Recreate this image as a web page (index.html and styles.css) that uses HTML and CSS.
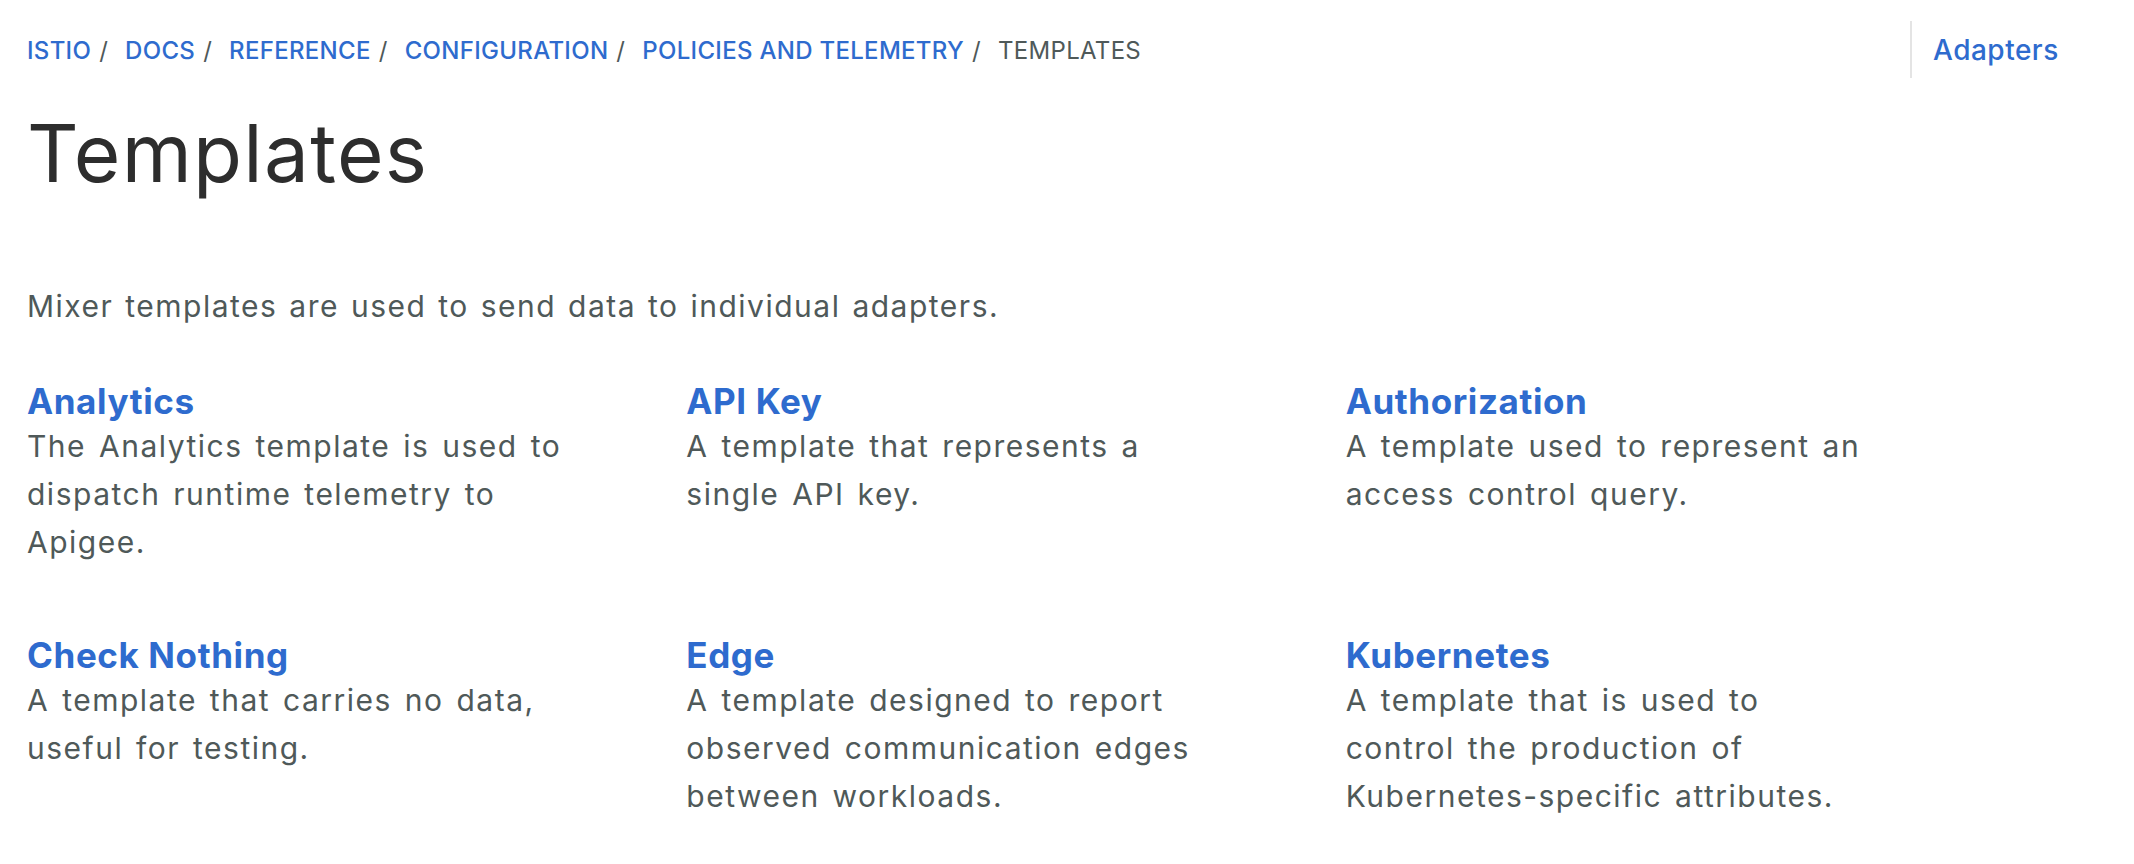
FILE: index.html
```html
<!DOCTYPE html>
<html lang="en">
<head>
<meta charset="utf-8">
<title>Templates</title>
<link rel="stylesheet" href="styles.css">
</head>
<body>
<div class="page">
  <main class="main">
    <nav class="breadcrumbs">
      <ol>
        <li><a href="#">Istio</a></li>
        <li><a href="#">Docs</a></li>
        <li><a href="#">Reference</a></li>
        <li><a href="#">Configuration</a></li>
        <li><a href="#">Policies and Telemetry</a></li>
        <li class="current">Templates</li>
      </ol>
    </nav>
    <h1 class="title">Templates</h1>
    <p class="lead">Mixer templates are used to send data to individual adapters.</p>
    <div class="entries">
      <div class="entry">
        <a class="entry-title" href="#">Analytics</a>
        <p class="entry-desc">The Analytics template is used to dispatch runtime telemetry to Apigee.</p>
      </div>
      <div class="entry">
        <a class="entry-title" href="#">API Key</a>
        <p class="entry-desc">A template that represents a single API key.</p>
      </div>
      <div class="entry">
        <a class="entry-title" href="#">Authorization</a>
        <p class="entry-desc">A template used to represent an access control query.</p>
      </div>
      <div class="entry">
        <a class="entry-title" href="#">Check Nothing</a>
        <p class="entry-desc">A template that carries no data, useful for testing.</p>
      </div>
      <div class="entry">
        <a class="entry-title" href="#">Edge</a>
        <p class="entry-desc">A template designed to report observed communication edges between workloads.</p>
      </div>
      <div class="entry">
        <a class="entry-title" href="#">Kubernetes</a>
        <p class="entry-desc">A template that is used to control the production of Kubernetes-specific attributes.</p>
      </div>
    </div>
  </main>
  <aside class="aside">
    <a class="aside-link" href="#">Adapters</a>
  </aside>
</div>
</body>
</html>
```

FILE: styles.css
```css
html, body {
  margin: 0;
  padding: 0;
  background: #ffffff;
}

body {
  font-family: Inter, "Open Sans", "Liberation Sans", sans-serif;
  color: #4f5959;
}

a {
  color: #2e6bce;
  text-decoration: none;
}

.page {
  display: flex;
  align-items: flex-start;
}

.main {
  flex: 1;
  min-width: 0;
  padding: 33px 29px 0 27px;
}

.breadcrumbs ol {
  list-style: none;
  margin: 0;
  padding: 0;
  display: flex;
  font-size: 24px;
  line-height: 36px;
  letter-spacing: 0.3px;
  text-transform: uppercase;
}

.breadcrumbs li {
  display: flex;
}

.breadcrumbs li a {
  font-weight: 500;
}

.breadcrumbs li:not(:last-child)::after {
  content: "/";
  margin: 0 17px 0 8px;
  color: #4f5959;
}

.breadcrumbs .current {
  color: #4f5959;
}

.title {
  margin: 34px 0 0;
  font-size: 80px;
  line-height: 100px;
  font-weight: 400;
  letter-spacing: 1.3px;
  color: #2d2d2d;
}

.lead {
  margin: 79px 0 0;
  font-size: 30px;
  line-height: 48px;
  letter-spacing: 1.5px;
  word-spacing: 2px;
}

.entries {
  margin-top: 45px;
  display: grid;
  grid-template-columns: repeat(3, 1fr);
  column-gap: 124px;
  row-gap: 63px;
}

.entry-title {
  display: block;
  font-size: 35px;
  line-height: 46px;
  font-weight: 700;
  letter-spacing: 0.6px;
  padding-top: 3px;
  margin-bottom: -2px;
}

.entry-desc {
  margin: 0;
  font-size: 30px;
  line-height: 48px;
  letter-spacing: 1.5px;
  word-spacing: 3px;
}

.aside {
  flex: 0 0 224px;
  margin-top: 21px;
  height: 57px;
  border-left: 2px solid #e4e4e4;
  box-sizing: border-box;
  padding-left: 21px;
  display: flex;
  align-items: center;
}

.aside-link {
  font-size: 28px;
  font-weight: 500;
  letter-spacing: 0.5px;
}
```
